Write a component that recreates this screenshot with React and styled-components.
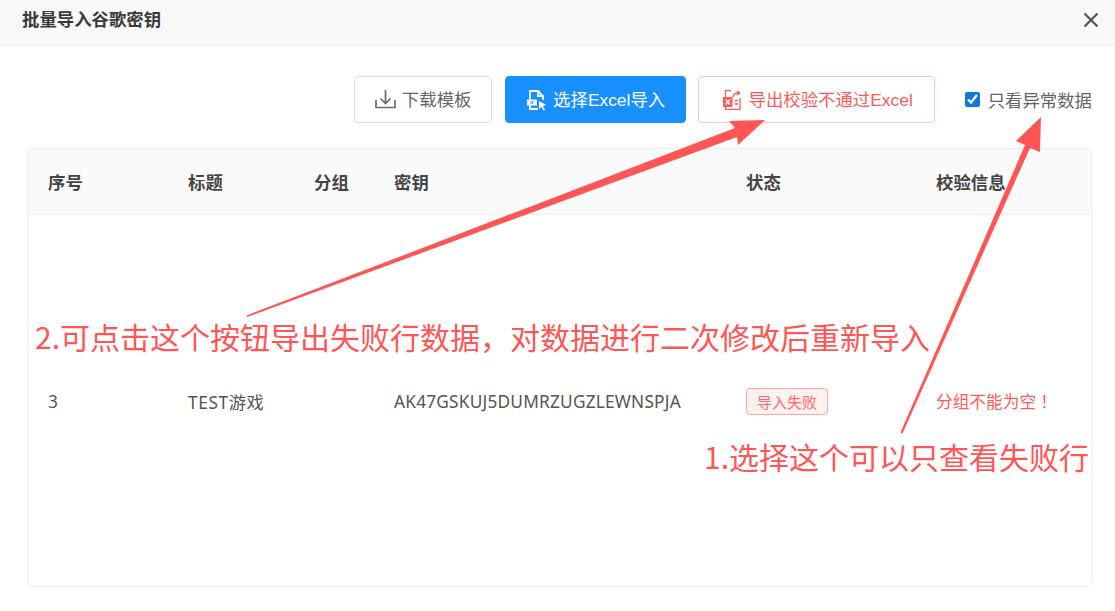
import React from "react";
import styled, { createGlobalStyle } from "styled-components";

const Global = createGlobalStyle`
  html, body { margin: 0; padding: 0; background: #fff; }
  body { font-family: "Noto Sans CJK SC", "Noto Sans", sans-serif; color: #555; overflow: hidden; }
`;
const Dialog = styled.div`
  position: relative;
  width: 1115px;
  height: 611px;
  background: #fff;
  overflow: hidden;
`;
const Header = styled.header`
  height: 45px;
  box-sizing: content-box;
  border-bottom: 1px solid #ebebeb;
  background: #f8f8f8;
  display: flex;
  align-items: center;
  justify-content: space-between;
  padding: 0 15px 0 22px;
`;
const Title = styled.h1`
  margin: 0 0 7px;
  font-size: 17.4px;
  font-weight: 700;
  color: #3a3a3a;
  line-height: 24px;
`;
const Close = styled.button`
  border: 0;
  background: none;
  padding: 0;
  width: 18px;
  height: 18px;
  display: flex;
  color: #555;
  margin-bottom: 6px;
`;
const Toolbar = styled.div`
  display: flex;
  align-items: center;
  justify-content: flex-end;
  padding: 30px 23px 0 0;
  height: 47px;
`;
const Btn = styled.button`
  box-sizing: border-box;
  height: 47px;
  width: ${(p) => p.$w}px;
  margin-right: ${(p) => p.$mr}px;
  border-radius: 4px;
  border: 1px solid ${(p) => (p.$kind === "primary" ? "#1890ff" : p.$kind === "danger" ? "#ffc4c4" : "#dcdcdc")};
  background: ${(p) => (p.$kind === "primary" ? "#1890ff" : "#fff")};
  color: ${(p) => (p.$kind === "primary" ? "#fff" : p.$kind === "danger" ? "#ff5a5a" : "#666")};
  display: flex;
  align-items: center;
  justify-content: center;
  gap: 6px;
  padding: 0 0 0 ${(p) => (p.$kind ? 2 : 1)}px;
  font-family: "Liberation Sans", "Noto Sans CJK SC", sans-serif;
  font-size: 17.4px;
  line-height: 24px;
`;
const Check = styled.label`
  display: flex;
  align-items: center;
  gap: 8px;
  font-size: 17.4px;
  color: #666;
  line-height: 24px;
  input {
    margin: 0;
    width: 15px;
    height: 15px;
    accent-color: #0f78dc;
  }
`;
const Card = styled.section`
  box-sizing: border-box;
  margin: 25px 23px 0 27px;
  height: 439px;
  border: 1px solid #eee;
  border-radius: 4px;
`;
const Row = styled.div`
  display: grid;
  grid-template-columns: 140px 126px 80px 352px 190px 1fr;
  align-items: center;
  padding-left: 20px;
`;
const HeadRow = styled(Row)`
  height: 65px;
  background: #fafafa;
  border-bottom: 1px solid #f0f0f0;
  font-size: 17.4px;
  font-weight: 700;
  color: #444;
`;
const BodyRow = styled(Row)`
  margin-top: 166px;
  height: 40px;
  font-family: "Noto Sans", "Noto Sans CJK SC", sans-serif;
  font-size: 17.3px;
  letter-spacing: 0.2px;
  color: #555;
`;
const TitleCell = styled.span`
  letter-spacing: 0.6px;
`;
const Tag = styled.span`
  box-sizing: border-box;
  display: inline-flex;
  align-items: center;
  justify-content: center;
  width: 82px;
  height: 27px;
  border: 1px solid #ffa3a3;
  border-radius: 4px;
  background: #fff1f0;
  color: #ff6b6b;
  font-family: "Noto Sans CJK SC", sans-serif;
  font-size: 15px;
  letter-spacing: 0;
`;
const ErrorText = styled.span`
  color: #ff5a5a;
  font-family: "Noto Sans CJK SC", sans-serif;
  font-size: 16.7px;
  letter-spacing: 0;
`;
const Bang = styled.span`
  margin-left: 4px;
`;
const Arrows = styled.svg`
  position: absolute;
  left: 0;
  top: 0;
  pointer-events: none;
`;
const Note = styled.div`
  position: absolute;
  left: ${(p) => p.$x}px;
  top: ${(p) => p.$y}px;
  font-family: "Noto Sans CJK SC", sans-serif;
  font-size: 30px;
  line-height: 40px;
  color: #ff5555;
  white-space: nowrap;
`;

const DownloadIcon = () => (
  <svg width="21" height="21" viewBox="0 0 21 21" fill="none" stroke="#6b6b6b" strokeWidth="1.7">
    <path d="M10.500 1v13M5.500 9.500l5 5 5-5M1 11v7.500h19V11" />
  </svg>
);
const ImportIcon = () => (
  <svg width="20" height="22" viewBox="0 0 20 22" fill="none" stroke="#fff" strokeWidth="1.8">
    <path d="M3 10V2h8l5 5v4M11 2v5h5M3 16v4h8" />
    <rect x="0" y="10.500" width="10" height="6" fill="#fff" stroke="none" />
    <path d="M3.500 12l3 3M6.500 12l-3 3" stroke="#1890ff" strokeWidth="1" />
    <path d="M12 12l7 4-3 1 2 4-1.500.5-2-3.500L12 20z" fill="#fff" stroke="none" />
  </svg>
);
const ExportIcon = () => (
  <svg width="21" height="20" viewBox="-1 0 21 20" fill="none" stroke="#ff5a5a" strokeWidth="1.3">
    <path d="M2.500 7V.7H8M17 8v11.300H2.500V17" />
    <rect x="0" y="7" width="9.500" height="10" fill="#ff5a5a" stroke="none" />
    <path d="M2.500 9.500l4.500 5M7 9.500l-4.500 5" stroke="#fff" strokeWidth="1.300" />
    <path d="M10 7c.5-3 3-4 5-4" strokeWidth="1.500" />
    <path d="M14 .2 18 3l-4 2.800z" fill="#ff5a5a" stroke="none" />
    <path d="M11.500 10.500h3.500M11.500 14h3.500" />
  </svg>
);

export default function App() {
  return (
    <Dialog>
      <Global />
      <Header>
        <Title>批量导入谷歌密钥</Title>
        <Close aria-label="关闭">
          <svg width="18" height="18" viewBox="0 0 18 18" stroke="currentColor" strokeWidth="2.300" fill="none">
            <path d="M2.500 2.500l13 13M15.500 2.500l-13 13" />
          </svg>
        </Close>
      </Header>
      <Toolbar>
        <Btn $w={138} $mr={13}><DownloadIcon />下载模板</Btn>
        <Btn $w={181} $mr={12} $kind="primary"><ImportIcon />选择Excel导入</Btn>
        <Btn $w={237} $mr={30} $kind="danger"><ExportIcon />导出校验不通过Excel</Btn>
        <Check><input type="checkbox" defaultChecked readOnly />只看异常数据</Check>
      </Toolbar>
      <Card>
        <HeadRow>
          <span>序号</span><span>标题</span><span>分组</span><span>密钥</span><span>状态</span><span>校验信息</span>
        </HeadRow>
        <BodyRow>
          <span>3</span>
          <TitleCell>TEST游戏</TitleCell>
          <span />
          <span>AK47GSKUJ5DUMRZUGZLEWNSPJA</span>
          <span><Tag>导入失败</Tag></span>
          <ErrorText>分组不能为空<Bang>！</Bang></ErrorText>
        </BodyRow>
      </Card>
      <Arrows width="1115" height="611" viewBox="0 0 1115 611" fill="#ff5555">
        <polygon points="246.500,315.500 735,128 729,121 765,120 738,145 737,137 247.500,317" />
        <polygon points="900.500,432.500 1025,145 1016,141 1041,117 1040,152 1030,148 902.500,433.500" />
      </Arrows>
      <Note $x={35} $y={316}>2.可点击这个按钮导出失败行数据，对数据进行二次修改后重新导入</Note>
      <Note $x={704} $y={436}>1.选择这个可以只查看失败行</Note>
    </Dialog>
  );
}
